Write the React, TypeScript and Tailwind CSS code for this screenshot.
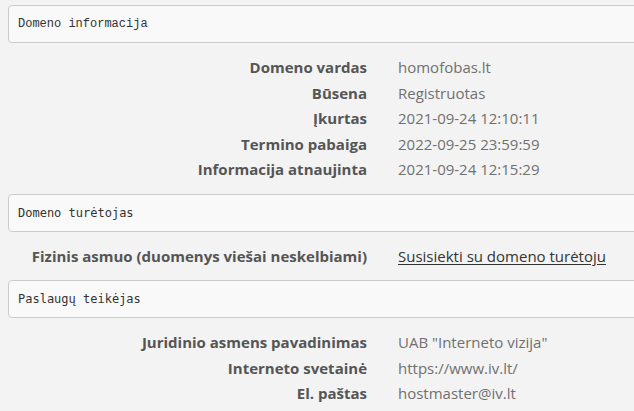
import React from 'react';

type Row = { label: string; value: string; link?: boolean };

const sections: { title: string; mono: string; rows: Row[] }[] = [
  {
    title: 'Domeno informacija',
    mono: "font-['Liberation_Mono',monospace]",
    rows: [
      { label: 'Domeno vardas', value: 'homofobas.lt' },
      { label: 'Būsena', value: 'Registruotas' },
      { label: 'Įkurtas', value: '2021-09-24 12:10:11' },
      { label: 'Termino pabaiga', value: '2022-09-25 23:59:59' },
      { label: 'Informacija atnaujinta', value: '2021-09-24 12:15:29' },
    ],
  },
  {
    title: 'Domeno turėtojas',
    mono: "font-['DejaVu_Sans_Mono',monospace] text-[11.5px]",
    rows: [
      { label: 'Fizinis asmuo (duomenys viešai neskelbiami)', value: 'Susisiekti su domeno turėtoju', link: true },
    ],
  },
  {
    title: 'Paslaugų teikėjas',
    mono: "font-['DejaVu_Sans_Mono',monospace] text-[11.5px]",
    rows: [
      { label: 'Juridinio asmens pavadinimas', value: 'UAB "Interneto vizija"' },
      { label: 'Interneto svetainė', value: 'https://www.iv.lt/' },
      { label: 'El. paštas', value: 'hostmaster@iv.lt' },
    ],
  },
];

const SectionHeader: React.FC<{ title: string; mono: string }> = ({ title, mono }) => (
  <div className="ml-[8px] mr-[-12px] h-[38px] flex items-center px-[9px] bg-[#f9f9f9] border border-[#cccccc] rounded-[4px]">
    <span className={`text-[12px] text-[#333] ${mono}`}>{title}</span>
  </div>
);

export default function App() {
  return (
    <div className="w-[634px] h-[411px] overflow-hidden bg-[#f3f3f3] pt-[5px] font-['Open_Sans',sans-serif]">
      {sections.map((s, i) => (
        <div key={s.title} className={i > 0 ? 'mt-[11px]' : ''}>
          <SectionHeader title={s.title} mono={s.mono} />
          <div className="mt-[12px] grid grid-cols-[367px_1fr] gap-x-[31px] text-[15px] leading-[25.5px]">
            {s.rows.map((r) => (
              <React.Fragment key={r.label}>
                <div className="text-right font-bold text-[#555] whitespace-nowrap">{r.label}</div>
                <div className="whitespace-nowrap">
                  {r.link ? (
                    <a href="#" className="text-[#333] underline underline-offset-[2px]">{r.value}</a>
                  ) : (
                    <span className="text-[#707070]">{r.value}</span>
                  )}
                </div>
              </React.Fragment>
            ))}
          </div>
        </div>
      ))}
    </div>
  );
}
